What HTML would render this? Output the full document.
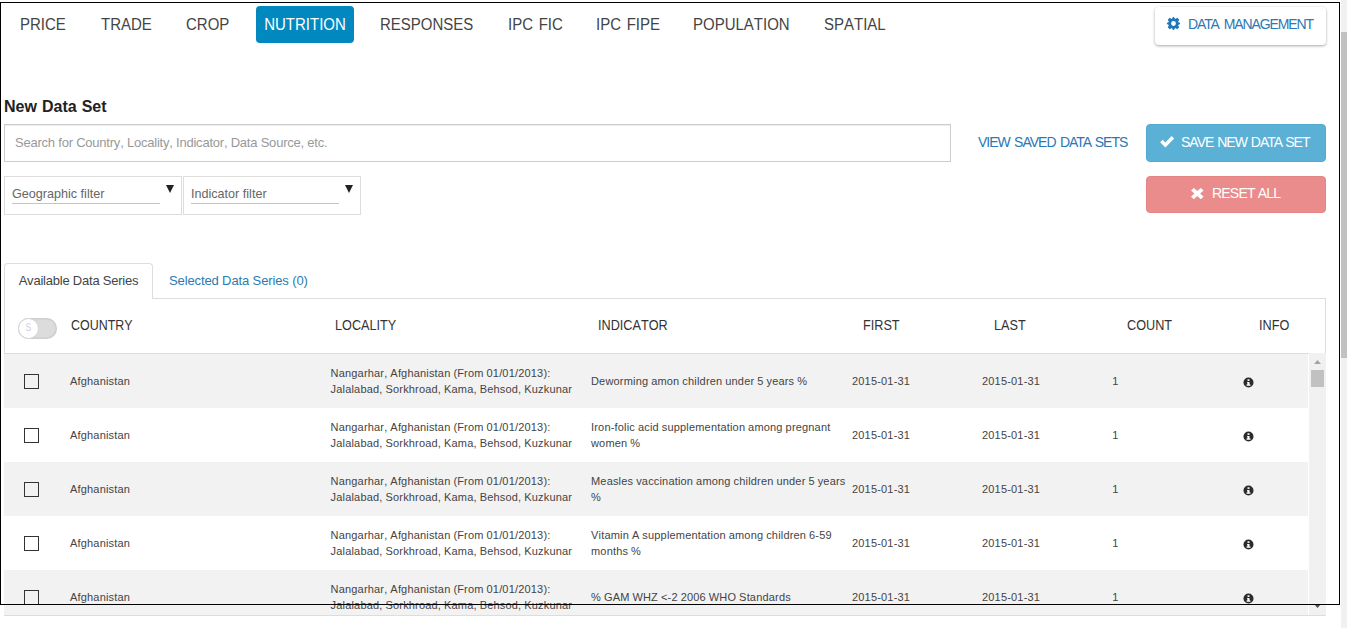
<!DOCTYPE html>
<html lang="en">
<head>
<meta charset="utf-8">
<title>New Data Set</title>
<style>
*{box-sizing:border-box;margin:0;padding:0}
html,body{width:1347px;height:628px;overflow:hidden;background:#fff}
body{font-family:"Liberation Sans",Arial,sans-serif;color:#333;position:relative;font-kerning:none}
.abs{position:absolute;white-space:nowrap}
/* outer frame */
#frame{position:absolute;left:0;top:2px;width:1340px;height:603px;border:1px solid #000;z-index:50;pointer-events:none}
/* page scrollbar */
#sb{position:absolute;left:1341px;top:0;width:6px;height:628px;background:#f1f1f1}
#sb i{position:absolute;left:0;top:32px;width:6px;height:326px;background:#c1c1c1}
/* nav */
.nav{position:absolute;top:6px;height:37px;line-height:37px;font-size:15px;word-spacing:1.5px;color:#444;white-space:nowrap}
.nav span{display:inline-block;transform:scaleY(1.05);transform-origin:0 24px}
.nav.on{background:#0088bf;color:#fff;border-radius:4px;text-align:center}
/* buttons */
.btn{position:absolute;border-radius:4px;color:#fff;font-size:14px;letter-spacing:-1px;white-space:nowrap}
h3{position:absolute;left:4px;top:97px;font-size:16px;font-weight:bold;color:#222;line-height:19px;letter-spacing:0;word-spacing:.6px}
#search{position:absolute;left:4px;top:124px;width:947px;height:38px;border:1px solid #ccc;background:#fff;box-shadow:inset 0 1px 1px rgba(0,0,0,.075)}
#search span{position:absolute;left:10px;top:0;line-height:36px;font-size:13px;letter-spacing:-.22px;color:#999}
.filt{position:absolute;top:176px;height:39px;width:178px;border:1px solid #ddd;background:#fff}
.filt span{position:absolute;left:7px;top:10px;font-size:12.6px;color:#666;line-height:14px}
.filt u{position:absolute;left:7px;top:26px;width:148px;height:1px;background:#c4c4c4}
.filt b{position:absolute;left:160.8px;top:8px;width:0;height:0;border-left:4.2px solid transparent;border-right:4.2px solid transparent;border-top:8.6px solid #222}
/* tabs */
#tabline{position:absolute;left:4px;top:298px;width:1322px;height:1px;background:#ddd}
#tab1{position:absolute;left:4px;top:263px;width:149px;height:36px;border:1px solid #ddd;border-bottom:0;border-radius:4px 4px 0 0;background:#fff;font-size:13px;letter-spacing:-.22px;color:#444;line-height:34px;text-align:center}
#tab2{position:absolute;left:169px;top:264px;font-size:13px;letter-spacing:-.12px;color:#2b7bb0;line-height:34px;white-space:nowrap}
#thead{position:absolute;left:4px;top:299px;width:1322px;height:54px;border-left:1px solid #ddd;border-right:1px solid #ddd;background:#fff}
#thead:after{content:"";position:absolute;left:-1px;top:54px;width:1305px;height:1px;background:#ddd}
.th{position:absolute;top:298px;line-height:54px;font-size:14px;color:#333;white-space:nowrap;transform:scaleX(.905);transform-origin:0 50%}
#tog{position:absolute;left:18px;top:318px;width:39px;height:21px;border-radius:10.5px;background:#dcdcdc;box-shadow:inset 0 0 3px rgba(0,0,0,.18)}
#tog i{position:absolute;left:0;top:0;width:21px;height:21px;border-radius:10.5px;background:#fff;border:1px solid #d4d4d4;font-style:normal;font-size:10px;color:#cfcfdc;text-align:center;line-height:17px}
/* rows */
#tbody{position:absolute;left:4px;top:354px;width:1322px;height:262px;border-bottom:1px solid #ddd;overflow:hidden;background:#fff}
.row{position:absolute;left:0;width:1304px;height:54px;font-size:11px;letter-spacing:.18px;word-spacing:-.3px;color:#444}
.row.g{background:#f2f2f2}
.row span{position:absolute;white-space:nowrap;line-height:16px}
.cb{position:absolute;left:20px;top:20px;width:15px;height:15px;border:1px solid #333;background:transparent}
.ic{position:absolute;left:1238.7px;top:22.9px;width:11px;height:11px}
#isb{position:absolute;left:1309px;top:353px;width:17px;height:262px;background:#f1f1f1}
#isb i{position:absolute;left:2px;top:17px;width:13px;height:17px;background:#c1c1c1}
#isb b{position:absolute;left:5px;width:0;height:0;border-left:3.5px solid transparent;border-right:3.5px solid transparent}
#isb .up{top:7px;border-bottom:4px solid #a3a3a3}
#isb .dn{top:251px;border-top:4px solid #505050}
</style>
</head>
<body>
<div id="sb"><i></i></div>

<div class="nav" style="left:20px"><span>PRICE</span></div>
<div class="nav" style="left:101px"><span>TRADE</span></div>
<div class="nav" style="left:186px"><span>CROP</span></div>
<div class="nav on" style="left:256px;width:98px"><span>NUTRITION</span></div>
<div class="nav" style="left:380px"><span>RESPONSES</span></div>
<div class="nav" style="left:508px"><span>IPC FIC</span></div>
<div class="nav" style="left:596px"><span>IPC FIPE</span></div>
<div class="nav" style="left:693px"><span>POPULATION</span></div>
<div class="nav" style="left:824px"><span>SPATIAL</span></div>

<div class="abs" id="dm" style="left:1155px;top:7px;width:171px;height:38px;border-radius:4px;background:#fff;box-shadow:0 1px 3px rgba(0,0,0,.35);font-size:14px;color:#2a78b5;letter-spacing:-1.12px;word-spacing:3px;font-kerning:normal;line-height:34px"><svg style="position:absolute;left:11px;top:9px" width="15" height="15" viewBox="-7.5 -7.5 15 15"><path fill="#2175b8" fill-rule="evenodd" d="M-1.51 -4.66 L-0.46 -6.58 L0.46 -6.58 L1.51 -4.66 L1.68 -4.60 L3.86 -5.72 L5.72 -3.86 L4.60 -1.68 L4.66 -1.51 L6.58 -0.46 L6.58 0.46 L4.66 1.51 L4.60 1.68 L5.72 3.86 L3.86 5.72 L1.68 4.60 L1.51 4.66 L0.46 6.58 L-0.46 6.58 L-1.51 4.66 L-1.68 4.60 L-3.86 5.72 L-5.72 3.86 L-4.60 1.68 L-4.66 1.51 L-6.58 0.46 L-6.58 -0.46 L-4.66 -1.51 L-4.60 -1.68 L-5.72 -3.86 L-3.86 -5.72 L-1.68 -4.60Z M2.4 0A2.4 2.4 0 1 0 -2.4 0A2.4 2.4 0 1 0 2.4 0Z"/></svg><span style="position:absolute;left:33px">DATA MANAGEMENT</span></div>

<h3>New Data Set</h3>
<div id="search"><span>Search for Country, Locality, Indicator, Data Source, etc.</span></div>
<div class="abs" style="left:978px;top:124px;line-height:37px;font-size:14px;letter-spacing:-1px;word-spacing:1.45px;font-kerning:normal;color:#2a78b5">VIEW SAVED DATA SETS</div>
<div class="btn" style="left:1146px;top:124px;width:180px;height:38px;background:#5bb0d6;border:1px solid #54a9d1;line-height:36px;letter-spacing:-1px;word-spacing:1.05px;font-kerning:normal"><svg style="position:absolute;left:13px;top:11.2px" width="14.3" height="11.5" viewBox="0 0 14 11.5"><path fill="#fff" d="M0 6.3 L2.5 3.8 L5.2 6.5 L11.5 0.1 L14 2.6 L5.2 11.5Z"/></svg><span style="position:absolute;left:34px;top:-1px">SAVE NEW DATA SET</span></div>
<div class="btn" style="left:1146px;top:176px;width:180px;height:37px;background:#ea8c8c;border:1px solid #e68383;line-height:35px;letter-spacing:-.8px"><svg style="position:absolute;left:44.3px;top:10.5px" width="12.6" height="11.2" viewBox="0 0 12 12" preserveAspectRatio="none"><path fill="#fff" d="M2.7 0 L6 3.3 L9.3 0 L12 2.7 L8.7 6 L12 9.3 L9.3 12 L6 8.7 L2.7 12 L0 9.3 L3.3 6 L0 2.7Z"/></svg><span style="position:absolute;left:65px;top:-1px">RESET ALL</span></div>

<div class="filt" style="left:4px"><span>Geographic filter</span><u></u><b></b></div>
<div class="filt" style="left:183px"><span>Indicator filter</span><u></u><b></b></div>

<div id="tabline"></div>
<div id="tab1">Available Data Series</div>
<div id="tab2">Selected Data Series (0)</div>
<div id="thead"></div>
<div id="tog"><i><span style="display:inline-block;transform:scaleX(.85)">S</span></i></div>
<div class="th" style="left:71px;transform:scaleX(.89)">COUNTRY</div>
<div class="th" style="left:335px">LOCALITY</div>
<div class="th" style="left:598px">INDICATOR</div>
<div class="th" style="left:863px">FIRST</div>
<div class="th" style="left:994px">LAST</div>
<div class="th" style="left:1127px">COUNT</div>
<div class="th" style="left:1259px">INFO</div>

<div id="tbody">
  <div class="row g" style="top:0">
    <svg class="ic" viewBox="-5.5 -5.5 11 11"><circle r="5" fill="#2b2b2b"/><rect x="-1" y="-3.2" width="2" height="1.6" fill="#fff"/><path fill="#fff" d="M-1.4 -0.6H1v2.6h1v1.2H-2V2h.9V0.4h-.3Z"/></svg><div class="cb"></div><span style="left:66px;top:19px">Afghanistan</span>
    <span style="left:326.6px;top:11px">Nangarhar, Afghanistan (From 01/01/2013):</span><span style="left:326.6px;top:27px">Jalalabad, Sorkhroad, Kama, Behsod, Kuzkunar</span>
    <span style="left:587px;top:19px">Deworming amon children under 5 years %</span>
    <span style="left:848px;top:19px">2015-01-31</span><span style="left:978px;top:19px">2015-01-31</span><span style="left:1108.3px;top:19px">1</span>
  </div>
  <div class="row" style="top:54px">
    <svg class="ic" viewBox="-5.5 -5.5 11 11"><circle r="5" fill="#2b2b2b"/><rect x="-1" y="-3.2" width="2" height="1.6" fill="#fff"/><path fill="#fff" d="M-1.4 -0.6H1v2.6h1v1.2H-2V2h.9V0.4h-.3Z"/></svg><div class="cb"></div><span style="left:66px;top:19px">Afghanistan</span>
    <span style="left:326.6px;top:11px">Nangarhar, Afghanistan (From 01/01/2013):</span><span style="left:326.6px;top:27px">Jalalabad, Sorkhroad, Kama, Behsod, Kuzkunar</span>
    <span style="left:587px;top:11px">Iron-folic acid supplementation among pregnant</span><span style="left:587px;top:27px">women %</span>
    <span style="left:848px;top:19px">2015-01-31</span><span style="left:978px;top:19px">2015-01-31</span><span style="left:1108.3px;top:19px">1</span>
  </div>
  <div class="row g" style="top:108px">
    <svg class="ic" viewBox="-5.5 -5.5 11 11"><circle r="5" fill="#2b2b2b"/><rect x="-1" y="-3.2" width="2" height="1.6" fill="#fff"/><path fill="#fff" d="M-1.4 -0.6H1v2.6h1v1.2H-2V2h.9V0.4h-.3Z"/></svg><div class="cb"></div><span style="left:66px;top:19px">Afghanistan</span>
    <span style="left:326.6px;top:11px">Nangarhar, Afghanistan (From 01/01/2013):</span><span style="left:326.6px;top:27px">Jalalabad, Sorkhroad, Kama, Behsod, Kuzkunar</span>
    <span style="left:587px;top:11px">Measles vaccination among children under 5 years</span><span style="left:587px;top:27px">%</span>
    <span style="left:848px;top:19px">2015-01-31</span><span style="left:978px;top:19px">2015-01-31</span><span style="left:1108.3px;top:19px">1</span>
  </div>
  <div class="row" style="top:162px">
    <svg class="ic" viewBox="-5.5 -5.5 11 11"><circle r="5" fill="#2b2b2b"/><rect x="-1" y="-3.2" width="2" height="1.6" fill="#fff"/><path fill="#fff" d="M-1.4 -0.6H1v2.6h1v1.2H-2V2h.9V0.4h-.3Z"/></svg><div class="cb"></div><span style="left:66px;top:19px">Afghanistan</span>
    <span style="left:326.6px;top:11px">Nangarhar, Afghanistan (From 01/01/2013):</span><span style="left:326.6px;top:27px">Jalalabad, Sorkhroad, Kama, Behsod, Kuzkunar</span>
    <span style="left:587px;top:11px">Vitamin A supplementation among children 6-59</span><span style="left:587px;top:27px">months %</span>
    <span style="left:848px;top:19px">2015-01-31</span><span style="left:978px;top:19px">2015-01-31</span><span style="left:1108.3px;top:19px">1</span>
  </div>
  <div class="row g" style="top:216px">
    <svg class="ic" viewBox="-5.5 -5.5 11 11"><circle r="5" fill="#2b2b2b"/><rect x="-1" y="-3.2" width="2" height="1.6" fill="#fff"/><path fill="#fff" d="M-1.4 -0.6H1v2.6h1v1.2H-2V2h.9V0.4h-.3Z"/></svg><div class="cb"></div><span style="left:66px;top:19px">Afghanistan</span>
    <span style="left:326.6px;top:11px">Nangarhar, Afghanistan (From 01/01/2013):</span><span style="left:326.6px;top:27px">Jalalabad, Sorkhroad, Kama, Behsod, Kuzkunar</span>
    <span style="left:587px;top:19px">% GAM WHZ &lt;-2 2006 WHO Standards</span>
    <span style="left:848px;top:19px">2015-01-31</span><span style="left:978px;top:19px">2015-01-31</span><span style="left:1108.3px;top:19px">1</span>
  </div>
</div>
<div id="isb"><svg style="position:absolute;left:5px;top:7px" width="7" height="4" viewBox="0 0 7 4"><path d="M0 4L3.5 0L7 4Z" fill="#a3a3a3"/></svg><i></i><svg style="position:absolute;left:5px;top:251px" width="7" height="4" viewBox="0 0 7 4"><path d="M0 0L3.5 4L7 0Z" fill="#505050"/></svg></div>

<div id="frame"></div>
</body>
</html>
